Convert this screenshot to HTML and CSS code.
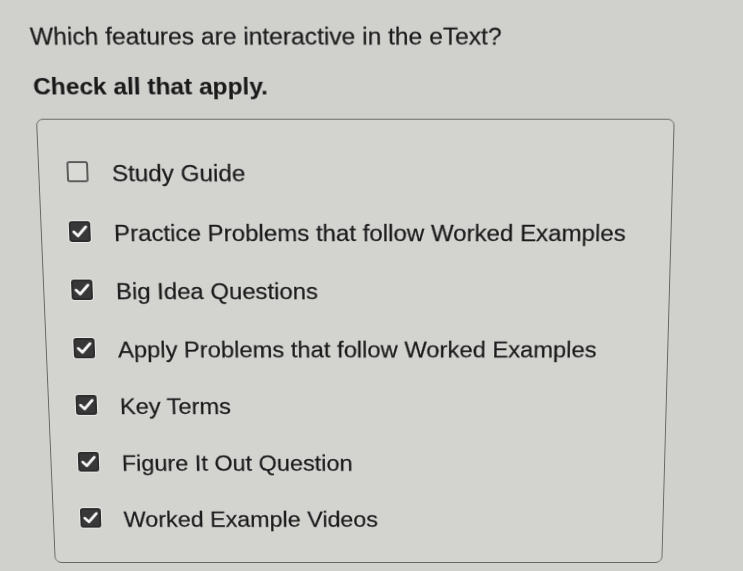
FILE: index.html
```html
<!DOCTYPE html>
<html lang="en">
<head>
<meta charset="utf-8">
<title>Check all that apply</title>
<link rel="stylesheet" href="styles.css">
</head>
<body>
<div class="page">
  <p class="question">Which features are interactive in the eText?</p>
  <p class="instruction">Check all that apply.</p>
  <div class="options">
    <label class="option">
      <span class="box"></span>
      <span class="label">Study Guide</span>
    </label>
    <label class="option">
      <span class="box checked"><svg viewBox="0 0 22 22"><path d="M4.8 11.3 L9 15.4 L17.2 6"/></svg></span>
      <span class="label">Practice Problems that follow Worked Examples</span>
    </label>
    <label class="option">
      <span class="box checked"><svg viewBox="0 0 22 22"><path d="M4.8 11.3 L9 15.4 L17.2 6"/></svg></span>
      <span class="label">Big Idea Questions</span>
    </label>
    <label class="option">
      <span class="box checked"><svg viewBox="0 0 22 22"><path d="M4.8 11.3 L9 15.4 L17.2 6"/></svg></span>
      <span class="label">Apply Problems that follow Worked Examples</span>
    </label>
    <label class="option">
      <span class="box checked"><svg viewBox="0 0 22 22"><path d="M4.8 11.3 L9 15.4 L17.2 6"/></svg></span>
      <span class="label">Key Terms</span>
    </label>
    <label class="option">
      <span class="box checked"><svg viewBox="0 0 22 22"><path d="M4.8 11.3 L9 15.4 L17.2 6"/></svg></span>
      <span class="label">Figure It Out Question</span>
    </label>
    <label class="option">
      <span class="box checked"><svg viewBox="0 0 22 22"><path d="M4.8 11.3 L9 15.4 L17.2 6"/></svg></span>
      <span class="label">Worked Example Videos</span>
    </label>
  </div>
</div>
</body>
</html>
```

FILE: styles.css
```css
html, body {
  margin: 0;
  padding: 0;
  background: #d0d0cd;
  overflow: hidden;
}
body {
  width: 743px;
  height: 571px;
  font-family: "Liberation Sans", Arial, sans-serif;
  color: #1a1a1a;
}
.page {
  width: 743px;
  height: 571px;
  padding-top: 23px;
  box-sizing: border-box;
  transform-origin: 356px 0;
  transform: perspective(1000px) rotateX(-6.2deg) skewX(0.4deg);
}
.question, .instruction {
  margin: 0;
  font-size: 24.7px;
  line-height: 28px;
  -webkit-text-stroke: 0.3px #1a1a1a;
  text-shadow: 0 0 1.5px rgba(255, 255, 255, 0.9);
}
.question {
  padding-left: 28.5px;
}
.instruction {
  margin-top: 23px;
  padding-left: 29.5px;
  font-weight: bold;
  -webkit-text-stroke: 0.2px #1a1a1a;
}
.options {
  box-sizing: border-box;
  width: 647px;
  margin: 19px 0 0 31px;
  border: 1.5px solid #666664;
  border-radius: 7px;
  background: #d3d3d0;
  padding: 42px 20px 34px 28px;
  display: flex;
  flex-direction: column;
  gap: 34.6px;
}
.option {
  display: flex;
  align-items: center;
  height: 28px;
  font-size: 24.7px;
  line-height: 28px;
}
.label {
  margin-left: 24px;
  -webkit-text-stroke: 0.3px #1a1a1a;
  text-shadow: 0 0 1.5px rgba(255, 255, 255, 0.9);
}
.box {
  box-sizing: border-box;
  flex: none;
  width: 22px;
  height: 22px;
  margin-bottom: 4px;
  border: 2px solid #5a5a5a;
  border-radius: 3px;
  background: #d9d9d6;
  display: flex;
}
.box.checked {
  background: #383838;
  border-color: #2c2c2c;
  box-shadow: 0 0 0 1px rgba(240, 240, 238, 0.8);
}
.box svg {
  flex: none;
  margin: -2px;
  width: 22px;
  height: 22px;
}
.box path {
  fill: none;
  stroke: #f4f4f4;
  stroke-width: 3;
  stroke-linecap: round;
  stroke-linejoin: round;
}
```
